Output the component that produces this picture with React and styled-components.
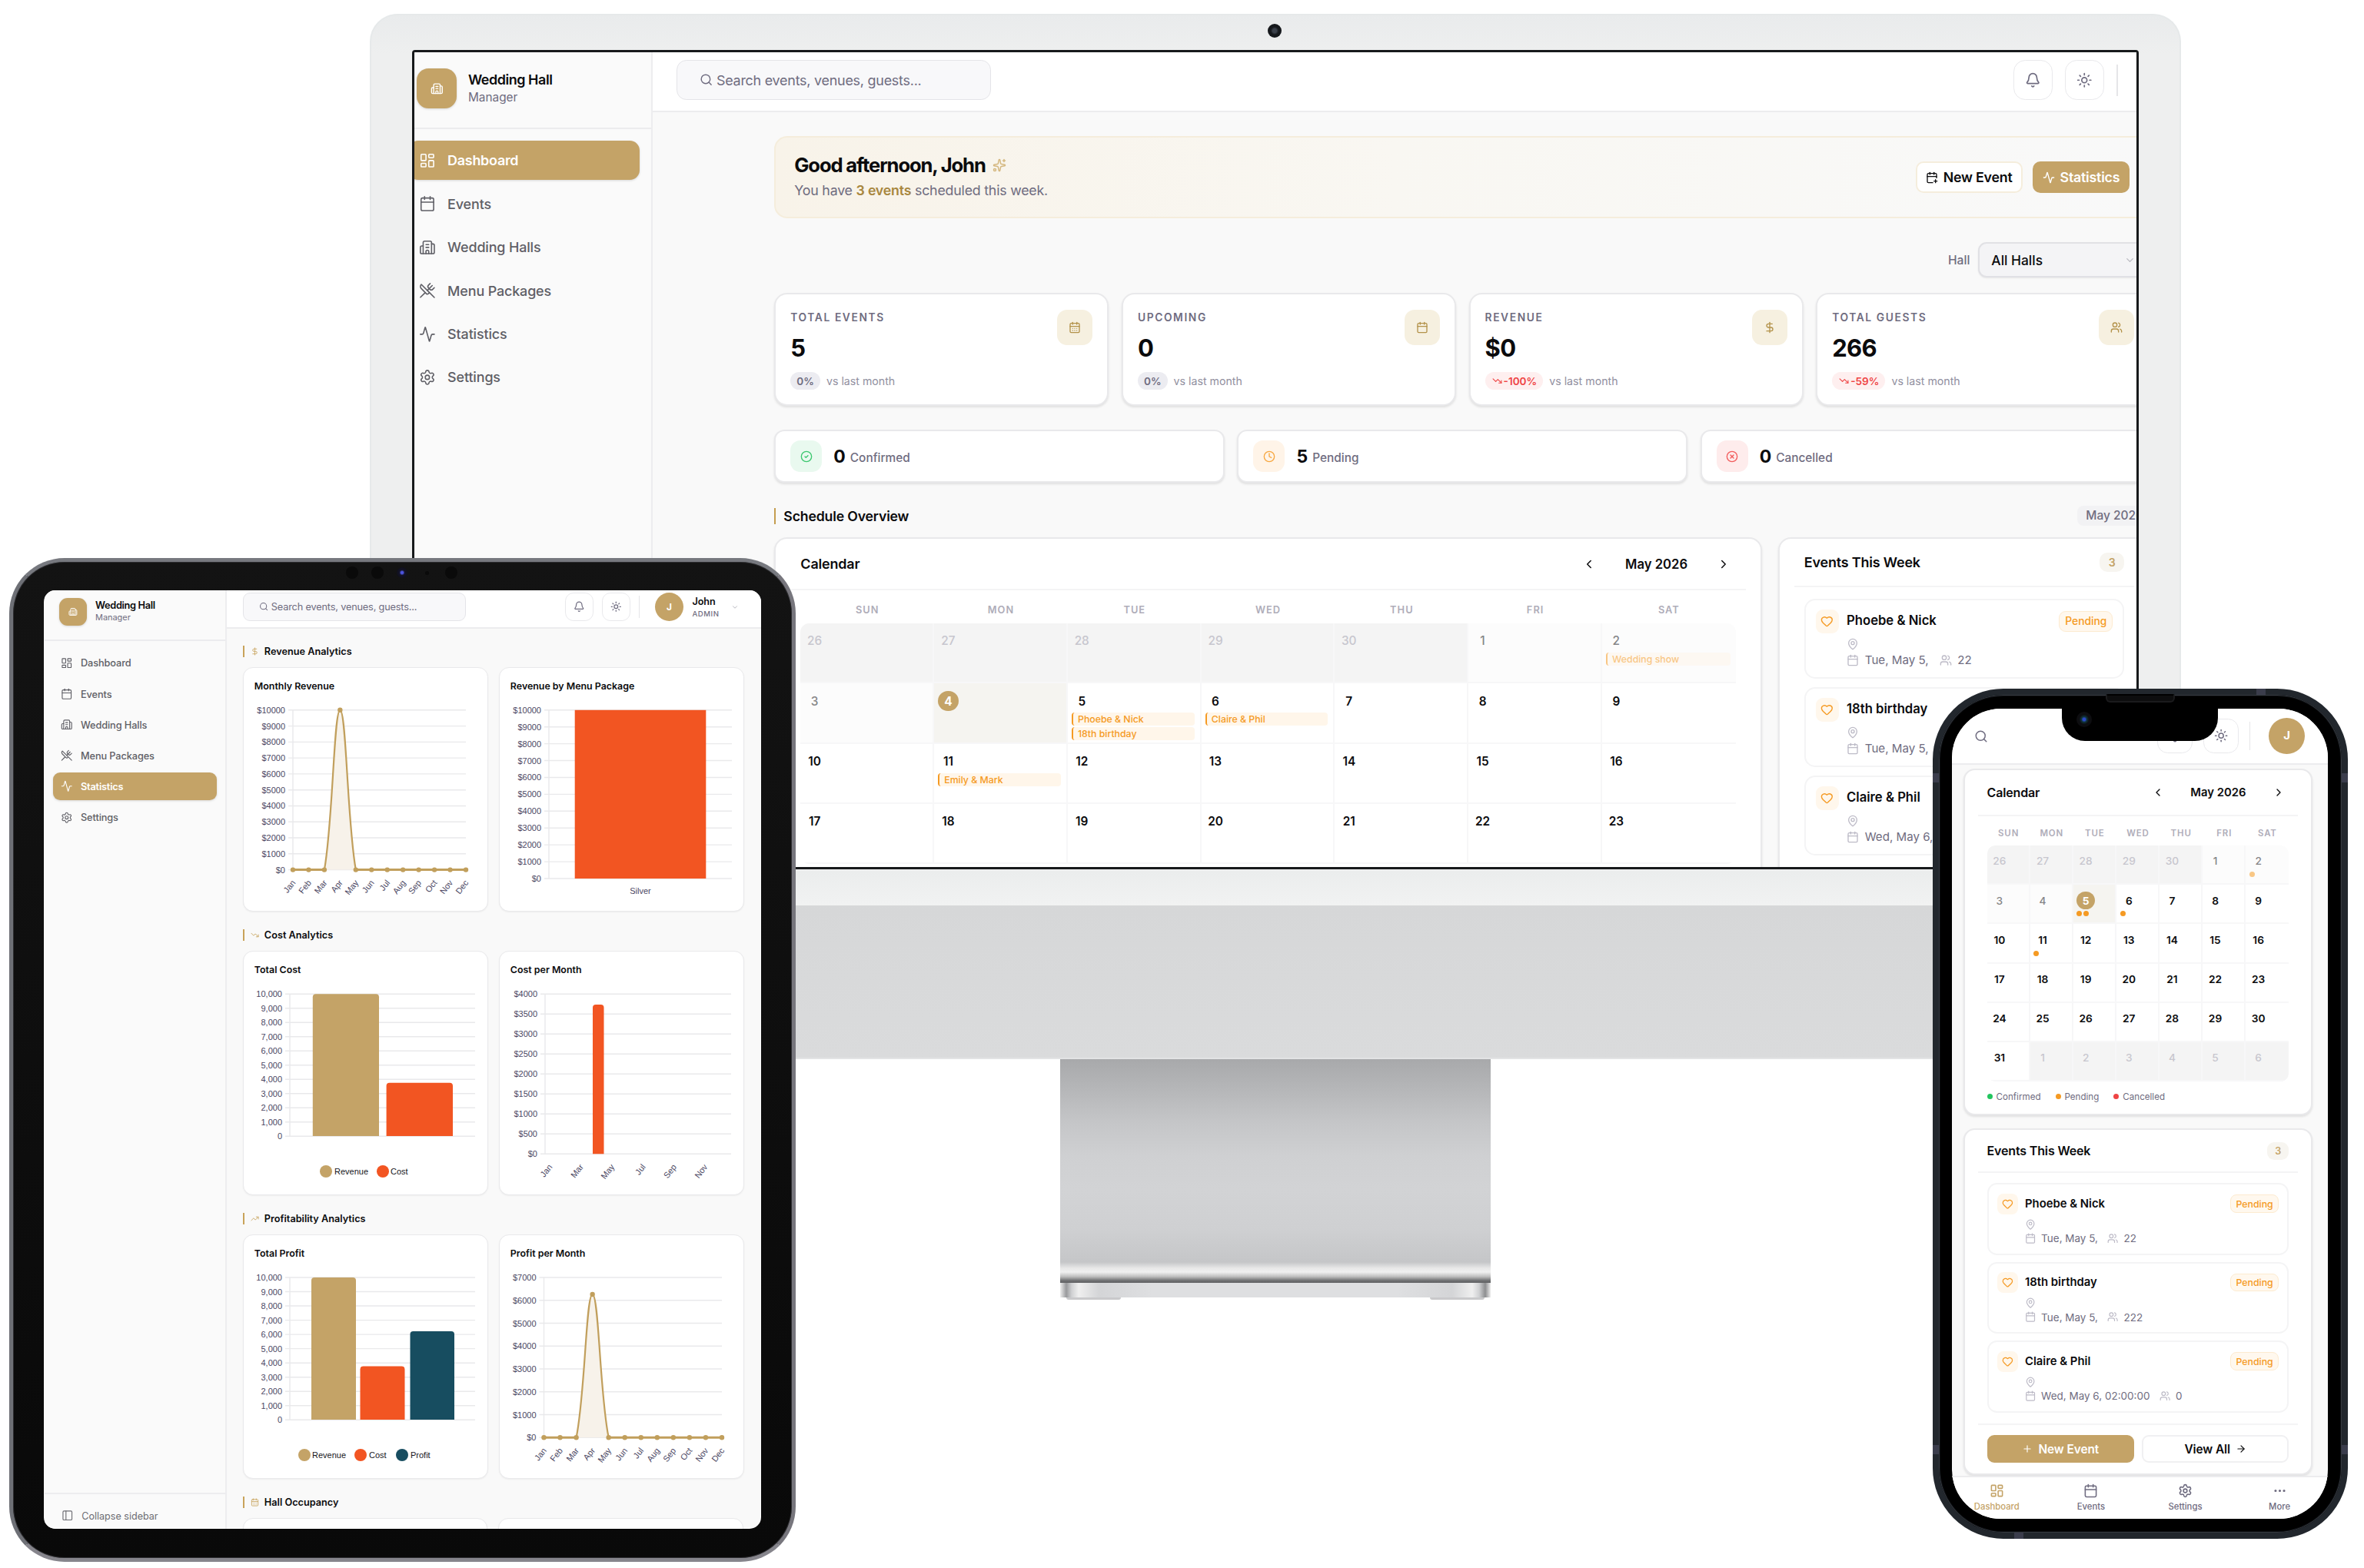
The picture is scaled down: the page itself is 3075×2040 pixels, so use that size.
import styled, { createGlobalStyle, css } from "styled-components";
import {
    Activity, ArrowRight, Bell, Building2, Calendar, CalendarDays, CalendarPlus, ChevronDown,
    ChevronLeft, ChevronRight, CircleCheck, CircleX, Clock, DollarSign, Ellipsis, Heart,
    LayoutDashboard, MapPin, PanelLeft, Plus, Search, Settings, Sparkles, Sun, TrendingDown,
    TrendingUp, Users, UtensilsCrossed,
} from "lucide-react";

// every screen sets --u, the size of one design pixel on that device
const u = (n) => `calc(var(--u) * ${n})`;

const GOLD = "#c4a367";
const ORANGE = "#f59a23";
const RED = "#f25522";
const TEAL = "#174d60";

const GlobalStyle = createGlobalStyle`
    *, *::before, *::after { box-sizing: border-box; }
    body {
        margin: 0;
        background: #fff;
        font-family: Inter, "Liberation Sans", sans-serif;
        color: #0b0b0d;
    }
    svg { display: block; flex-shrink: 0; }
`;

const Stage = styled.main`
    position: relative;
    width: 3075px;
    height: 2040px;
    overflow: hidden;
    background: #fff;
`;

/* ---------- devices ---------- */

const Monitor = styled.section`
    position: absolute;
    left: 481px;
    top: 18px;
    width: 2356px;
    display: flex;
    flex-direction: column;
    align-items: center;
`;

const Bezel = styled.div`
    width: 100%;
    height: 1160px;
    padding: 45px 55px 0;
    border: 2px solid #e6e9ea;
    border-bottom: 0;
    border-radius: 36px 36px 0 0;
    background: linear-gradient(#e9ebec 0, #eeefef 50px, #eeefef 1110px, #ebeded 1114px, #f1f2f2 1158px);
`;

const MonitorCam = styled.span`
    position: absolute;
    left: 1168px;
    top: 13px;
    width: 18px;
    height: 18px;
    border-radius: 50%;
    background: radial-gradient(circle, #3b414b 0 20%, #15181c 40%);
`;

const MonitorScreen = styled.div`
    --u: 1.282px;
    width: 2246px;
    height: 1066px;
    margin-left: -2px;
    border: 3px solid #17191b;
    border-radius: 4px;
    overflow: hidden;
    background: #f9f9f9;
`;

const Chin = styled.div`
    width: 100%;
    height: 200px;
    border-radius: 0 0 36px 36px;
    background: linear-gradient(#d6d7d8, #dadbdc);
    border-bottom: 2px solid #e2e3e4;
`;

const Neck = styled.div`
    width: 560px;
    height: 291px;
    background: linear-gradient(
        #a8a9ab 0, #b5b6b8 38px, #c4c5c7 80px, #cfd0d2 125px, #d2d3d5 170px, #cfd0d2 220px,
        #c5c6c8 264px, #e8e8e8 272px, #f0f0f0 277px, #bdbdbd 283px, #707173 288px, #606163 291px
    );
`;

const Foot = styled.div`
    width: 560px;
    height: 19px;
    padding: 0 2px;
    background: linear-gradient(90deg, #eee 0, #999a9c 8px, #d0d1d3 15px, #efefef 24px, #d4d5d7 50px, #dedfe1 120px, #dedfe1 440px, #d4d5d7 510px, #efefef 536px, #d0d1d3 545px, #8d8e90 553px, #eee 560px);
`;

const Pads = styled.div`
    width: 544px;
    display: flex;
    justify-content: space-between;
    span { width: 71px; height: 3px; background: #c9c9cb; border-radius: 0 0 4px 4px; }
`;

const Tablet = styled.section`
    position: absolute;
    left: 12px;
    top: 726px;
    width: 1023px;
    height: 1306px;
    padding: 37px 40px;
    border: 5px solid;
    border-color: #77797f #77767d #86858c #6e7076;
    border-radius: 72px;
    background: linear-gradient(#131313, #090909);
    box-shadow: inset 0 0 0 1px #2d2d30;
`;

const SideKey = styled.i`
    position: absolute;
    z-index: -1;
    left: ${(p) => p.$x}px;
    top: ${(p) => p.$y}px;
    width: ${(p) => p.$w}px;
    height: ${(p) => p.$h}px;
    background: ${(p) => p.$color || "#50525a"};
`;

const Lens = styled.i`
    position: absolute;
    left: ${(p) => p.$x}px;
    top: ${(p) => p.$y}px;
    width: ${(p) => p.$d}px;
    height: ${(p) => p.$d}px;
    border-radius: 50%;
    background: ${(p) => p.$fill || "#0a0a0a"};
`;

const TabletScreen = styled.div`
    --u: 0.911px;
    width: 933px;
    height: 1221px;
    border-radius: 15px;
    overflow: hidden;
    background: #f9f9f9;
`;

const Phone = styled.section`
    position: absolute;
    left: 2514px;
    top: 896px;
    width: 540px;
    height: 1106px;
    padding: 18px 17px;
    border: 8px solid #22272d;
    border-radius: 92px;
    background: #000;
    box-shadow: inset 0 0 0 1px #35393f, inset 0 0 0 2px #0b0d10;
`;

const Band = styled.i`
    position: absolute;
    left: ${(p) => p.$x}px;
    top: ${(p) => p.$y}px;
    width: ${(p) => (p.$flat ? 12 : 8)}px;
    height: ${(p) => (p.$flat ? 8 : 12)}px;
    background: #3b3d4c;
`;

const PhoneScreen = styled.div`
    --u: 1.143px;
    width: 489px;
    height: 1054px;
    border-radius: 64px;
    overflow: hidden;
    background: #f9f9f9;
    display: flex;
    flex-direction: column;
`;

const Notch = styled.div`
    position: absolute;
    left: 160px;
    top: 14px;
    width: 203px;
    height: 46px;
    border-radius: 0 0 30px 30px;
    background: #000;
`;

const Speaker = styled.i`
    position: absolute;
    left: 217px;
    top: -1px;
    width: 90px;
    height: 11px;
    border: 2px solid #1b1b1d;
    border-top-color: #000;
    border-radius: 3px 3px 6px 6px;
    background: #0d0d0e;
`;

/* ---------- app shell ---------- */

const Shell = styled.div`
    display: flex;
    height: calc(100% + ${(p) => p.$up}px);
    margin: -${(p) => p.$up}px 0 0 ${(p) => p.$left}px;
`;

const SidebarBox = styled.aside`
    width: ${u(260)};
    flex-shrink: 0;
    display: flex;
    flex-direction: column;
    background: #fafafa;
    border-right: 2px solid #ededef;
`;

const Brand = styled.div`
    height: ${u(81)};
    flex-shrink: 0;
    padding: 0 ${u(20.5)};
    display: flex;
    align-items: center;
    gap: ${u(12)};
    border-bottom: 2px solid #ececee;
`;

const Logo = styled.div`
    width: ${u(40)};
    height: ${u(40)};
    border-radius: ${u(12)};
    display: grid;
    place-items: center;
    background: ${GOLD};
    color: #fff;
    box-shadow: 0 1px 3px rgba(0, 0, 0, 0.15);
    svg { width: ${u(13)}; height: ${u(13)}; }
`;

const BrandText = styled.div`
    display: flex;
    flex-direction: column;
    strong { font-size: ${u(14)}; line-height: ${u(18)}; font-weight: 600; letter-spacing: -0.025em; }
    span { font-size: ${u(12)}; line-height: ${u(17)}; color: #6f6c80; }
`;

const Nav = styled.nav`
    flex: 1;
    padding: ${u(12)};
    display: flex;
    flex-direction: column;
    gap: ${u(4)};
`;

const NavItem = styled.a`
    height: ${u(40)};
    padding-left: ${u(10.6)};
    display: flex;
    align-items: center;
    gap: ${u(12)};
    border-radius: ${u(10)};
    font-size: ${u(14)};
    font-weight: 500;
    letter-spacing: -0.008em;
    color: #5f5f66;
    svg { width: ${u(17)}; height: ${u(17)}; stroke-width: 1.75; }
    ${(p) => p.$active && css`
        background: ${GOLD};
        color: #fff;
        font-weight: 600;
        letter-spacing: -0.015em;
        box-shadow: 0 1px 3px rgba(0, 0, 0, 0.15);
    `}
`;

const Collapse = styled.div`
    height: ${u(52)};
    flex-shrink: 0;
    padding: ${u(13)} ${u(24)} 0;
    display: flex;
    align-items: center;
    gap: ${u(12)};
    border-top: 2px solid #ededef;
    font-size: ${u(13.8)};
    color: #6c6c72;
    svg { width: ${u(17)}; height: ${u(17)}; stroke-width: 1.75; }
`;

const Main = styled.div`
    flex: 1;
    min-width: 0;
    display: flex;
    flex-direction: column;
`;

const TopBar = styled.header`
    height: ${u(64)};
    flex-shrink: 0;
    padding: ${(p) => p.$pad};
    display: flex;
    align-items: center;
    gap: ${u(12.5)};
    background: #fff;
    border-bottom: 2px solid #ececee;
`;

const SearchBox = styled.div`
    width: ${u(319)};
    height: ${u(40)};
    margin-right: auto;
    padding-left: ${u(22)};
    display: flex;
    align-items: center;
    gap: ${u(4)};
    border: ${u(1.5)} solid #e4e4e8;
    border-radius: ${u(10)};
    background: #f8f8fa;
    font-size: ${u(14)};
    letter-spacing: -0.014em;
    color: #6f6c80;
    svg { width: ${u(13.5)}; height: ${u(13.5)}; }
`;

const IconButton = styled.button`
    width: ${u(40)};
    height: ${u(40)};
    padding: 0;
    display: grid;
    place-items: center;
    border: ${u(1.5)} solid #e9e9ec;
    border-radius: ${u(12)};
    background: #fff;
    color: #6f6c80;
    svg { width: ${u(16)}; height: ${u(16)}; }
`;

const Divider = styled.i`
    width: ${u(1.4)};
    height: ${u(32)};
    background: #e5e5e8;
`;

const Avatar = styled.div`
    width: ${u(41)};
    height: ${u(41)};
    border-radius: 50%;
    display: grid;
    place-items: center;
    background: ${GOLD};
    color: #fff;
    font-size: ${u(13)};
    font-weight: 700;
`;

const UserName = styled.div`
    display: flex;
    flex-direction: column;
    margin-right: 4px;
    strong { font-size: 12.6px; line-height: 17px; font-weight: 600; }
    span { font-size: 9.6px; line-height: 15px; letter-spacing: 0.06em; font-weight: 500; color: #6f6c80; }
`;

const NAV = [
    ["Dashboard", LayoutDashboard],
    ["Events", Calendar],
    ["Wedding Halls", Building2],
    ["Menu Packages", UtensilsCrossed],
    ["Statistics", Activity],
    ["Settings", Settings],
];

const Sidebar = ({ active, children }) => (
    <SidebarBox>
        <Brand>
            <Logo><Building2 /></Logo>
            <BrandText>
                <strong>Wedding Hall</strong>
                <span>Manager</span>
            </BrandText>
        </Brand>
        <Nav>
            {NAV.map(([label, Icon]) => (
                <NavItem key={label} $active={label === active}>
                    <Icon />
                    {label}
                </NavItem>
            ))}
        </Nav>
        {children}
    </SidebarBox>
);

const HeaderSearch = () => (
    <SearchBox>
        <Search />
        Search events, venues, guests...
    </SearchBox>
);

/* ---------- cards shared by desktop and phone ---------- */

const Card = styled.div`
    border: 2px solid #e9e9eb;
    border-radius: ${u(13)};
    background: #fff;
    box-shadow: 0 2px 3px rgba(0, 0, 0, 0.1);
`;

const CalendarCard = styled(Card)`
    padding: 0 ${u(25)};
`;

const CardHead = styled.div`
    height: ${(p) => u(p.$h)};
    margin: 0 ${u(-10)};
    padding: 0 ${u(10)};
    display: flex;
    align-items: center;
    justify-content: space-between;
    border-bottom: 2px solid #f4f4f5;
    font-size: ${u(14)};
    font-weight: 600;
    letter-spacing: -0.01em;
`;

const MonthNav = styled.div`
    display: flex;
    align-items: center;
    gap: ${u(5)};
    padding-right: ${u(5)};
    font-size: ${u(13)};
    letter-spacing: 0;
    span { width: ${u(113)}; text-align: center; }
    svg { width: ${u(14)}; height: ${u(14)}; }
`;

const Week = styled.div`
    display: grid;
    grid-template-columns: repeat(7, 1fr);
    height: ${u(33.5)};
    align-items: center;
    padding-top: ${u(6)};
    text-align: center;
    font-size: ${u(10)};
    font-weight: 600;
    letter-spacing: 0.08em;
    color: #afadb9;
`;

const Days = styled.div`
    display: grid;
    grid-template-columns: repeat(7, 1fr);
    grid-auto-rows: ${(p) => p.$row}px;
    border-radius: ${u(9)};
    overflow: hidden;
`;

const Day = styled.div`
    min-width: 0;
    padding: ${u(7.6)} ${u(5.5)} 0 ${u(4)};
    border-right: 2px solid #f7f7f8;
    border-bottom: 2px solid #f7f7f8;
    display: flex;
    flex-direction: column;
    gap: 2px;
    &:nth-child(7n) { border-right: 0; }
    ${(p) => p.$kind === "out" && css`background: #f4f4f4; border-color: #f7f7f8; color: #c7c6ce;`}
    ${(p) => p.$kind === "past" && css`background: #fcfcfc; color: #858587;`}
    ${(p) => p.$kind === "today" && css`background: #f5f4f0;`}
    > * { opacity: ${(p) => (p.$kind === "past" ? 0.55 : 1)}; }
    > b { opacity: 1; }
`;

const DayNumber = styled.b`
    width: ${u(20.6)};
    height: ${u(20.6)};
    flex-shrink: 0;
    border-radius: 50%;
    display: grid;
    place-items: center;
    font-size: ${u(12)};
    font-weight: ${(p) => (p.$light ? 500 : 600)};
    ${(p) => p.$today && css`background: ${GOLD}; color: #fff; font-weight: 700;`}
`;

const Chip = styled.div`
    height: 17px;
    flex-shrink: 0;
    padding-left: 6px;
    display: flex;
    align-items: center;
    border-left: 2px solid ${ORANGE};
    border-radius: 4px;
    background: #fff6ea;
    color: ${ORANGE};
    font-size: 12.3px;
    font-weight: 500;
    white-space: nowrap;
`;

const Dots = styled.div`
    display: flex;
    gap: 2px;
`;

const Dot = styled.i`
    width: 7px;
    height: 7px;
    border-radius: 50%;
    background: ${(p) => p.$color || ORANGE};
`;

const Legend = styled.div`
    display: flex;
    align-items: center;
    gap: 19px;
    height: 42px;
    padding-bottom: 3px;
    font-size: 11.6px;
    color: #6f6c80;
    span { display: flex; align-items: center; gap: 5px; }
`;

const EventsCard = styled(Card)`
    padding: 0 ${u(25)};
`;

const Count = styled.span`
    min-width: ${u(25)};
    height: ${u(20)};
    display: grid;
    place-items: center;
    border-radius: ${u(8)};
    background: #f7f5f0;
    color: ${GOLD};
    font-size: ${u(11)};
    font-weight: 600;
`;

const EventList = styled.div`
    padding-top: ${u(11.5)};
    display: flex;
    flex-direction: column;
    gap: ${u(8.1)};
`;

const EventItem = styled.article`
    height: ${u(81.6)};
    padding: ${u(10)} ${u(10)};
    display: flex;
    align-items: flex-start;
    gap: ${u(8)};
    border: 2px solid #f4f4f5;
    border-radius: ${u(11)};
`;

const HeartBox = styled.div`
    width: ${u(23.5)};
    height: ${u(23.5)};
    display: grid;
    place-items: center;
    border-radius: ${u(7)};
    background: #fff7ec;
    color: ${ORANGE};
    svg { width: ${u(13)}; height: ${u(13)}; }
`;

const EventBody = styled.div`
    flex: 1;
    display: flex;
    flex-direction: column;
    strong { font-size: ${u(13)}; line-height: ${u(23)}; margin-bottom: ${u(4)}; font-weight: 600; }
`;

const Meta = styled.div`
    height: ${u(16)};
    display: flex;
    align-items: center;
    gap: ${u(6)};
    font-size: ${u(11.8)};
    color: #6f6c80;
    white-space: nowrap;
    svg { width: ${u(12.5)}; height: ${u(12.5)}; color: #bdbbc7; }
    svg + span + svg { margin-left: ${u(5)}; }
`;

const Pending = styled.span`
    height: ${u(20.5)};
    margin-top: ${u(1.5)};
    padding: 0 ${u(5.5)};
    display: flex;
    align-items: center;
    border: ${u(1.2)} solid #fdebd0;
    border-radius: ${u(7)};
    background: #fff8ee;
    color: ${ORANGE};
    font-size: ${u(10.8)};
    font-weight: 500;
`;

const CAL_EVENTS = {
    2: ["Wedding show"],
    5: ["Phoebe & Nick", "18th birthday"],
    6: ["Claire & Phil"],
    11: ["Emily & Mark"],
};

// May 2026 starts on a Friday
const buildDays = (rows, today) =>
    Array.from({ length: rows * 7 }, (_, i) => {
        const d = i - 4;
        if (d < 1) return { n: 30 + d, kind: "out" };
        if (d > 31) return { n: d - 31, kind: "out" };
        return { n: d, kind: d < today ? "past" : d === today ? "today" : "day", events: CAL_EVENTS[d] };
    });

const MonthCalendar = ({ rows, row, today, compact }) => (
    <CalendarCard>
        <CardHead $h={52.3}>
            Calendar
            <MonthNav>
                <ChevronLeft />
                <span>May 2026</span>
                <ChevronRight />
            </MonthNav>
        </CardHead>
        <Week>
            {["SUN", "MON", "TUE", "WED", "THU", "FRI", "SAT"].map((d) => <span key={d}>{d}</span>)}
        </Week>
        <Days $row={row}>
            {buildDays(rows, today).map((d, i) => (
                <Day key={i} $kind={d.kind}>
                    <DayNumber $today={d.kind === "today"} $light={d.kind === "out" || d.kind === "past"}>{d.n}</DayNumber>
                    {d.events && (compact
                        ? <Dots>{d.events.map((e) => <Dot key={e} />)}</Dots>
                        : d.events.map((e) => <Chip key={e}>{e}</Chip>))}
                </Day>
            ))}
        </Days>
        {compact && (
            <Legend>
                <span><Dot $color="#22c55e" />Confirmed</span>
                <span><Dot />Pending</span>
                <span><Dot $color="#ef4444" />Cancelled</span>
            </Legend>
        )}
    </CalendarCard>
);

const EVENTS = [
    { name: "Phoebe & Nick", date: "Tue, May 5,", guests: 22 },
    { name: "18th birthday", date: "Tue, May 5,", guests: 222 },
    { name: "Claire & Phil", date: "Wed, May 6, 02:00:00", guests: 0 },
];

const WeekEvents = ({ children }) => (
    <EventsCard>
        <CardHead $h={49}>
            Events This Week
            <Count>3</Count>
        </CardHead>
        <EventList>
            {EVENTS.map((e) => (
                <EventItem key={e.name}>
                    <HeartBox><Heart /></HeartBox>
                    <EventBody>
                        <strong>{e.name}</strong>
                        <Meta><MapPin /></Meta>
                        <Meta>
                            <Calendar />
                            <span>{e.date}</span>
                            <Users />
                            <span>{e.guests}</span>
                        </Meta>
                    </EventBody>
                    <Pending>Pending</Pending>
                </EventItem>
            ))}
        </EventList>
        {children}
    </EventsCard>
);

/* ---------- desktop dashboard ---------- */

const Dashboard = styled.div`
    width: 1790px;
    flex-shrink: 0;
    margin: 31px 0 0 158px;
    display: flex;
    flex-direction: column;
`;

const Banner = styled.div`
    height: 107px;
    padding: 0 25px 0 24px;
    display: flex;
    align-items: center;
    gap: 13px;
    border: 2px solid #f5eddc;
    border-radius: 17px;
    background: linear-gradient(90deg, #f8f3e9, #f9f7f2 45%, #f9f9f9);
`;

const Greeting = styled.div`
    flex: 1;
    h1 {
        margin: 0;
        display: flex;
        align-items: center;
        gap: 9px;
        font-size: 25.6px;
        line-height: 34px;
        font-weight: 700;
        letter-spacing: -0.045em;
    }
    h1 svg { width: 18px; height: 18px; color: #d5b880; }
    p { margin: 0; font-size: 17.8px; line-height: 32px; letter-spacing: -0.012em; color: #6f6c80; }
    b { font-weight: 600; color: #a8873f; }
`;

const Action = styled.button`
    height: 41px;
    padding: 0 11px;
    display: flex;
    align-items: center;
    gap: 7px;
    border: 2px solid ${(p) => (p.$gold ? GOLD : "#f5eddc")};
    border-radius: 10px;
    background: ${(p) => (p.$gold ? GOLD : "#fff")};
    color: ${(p) => (p.$gold ? "#fff" : "#0b0b0d")};
    font: 600 17.8px Inter, sans-serif;
    letter-spacing: -0.012em;
    svg { width: 16px; height: 16px; }
`;

const HallFilter = styled.div`
    height: 46px;
    margin: 31px 0 20px;
    display: flex;
    align-items: center;
    justify-content: flex-end;
    gap: 11px;
    font-size: 15.6px;
    font-weight: 500;
    color: #6f6c80;
`;

const Select = styled.div`
    width: 224px;
    height: 46px;
    padding: 0 17px 0 15px;
    display: flex;
    align-items: center;
    justify-content: space-between;
    border: 2px solid #e1e1e5;
    border-radius: 11px;
    background: #f4f4f6;
    font-size: 17.4px;
    color: #0b0b0d;
    box-shadow: 0 1px 2px rgba(0, 0, 0, 0.08);
    svg { width: 15px; height: 15px; color: #b9b9c0; }
`;

const Row = styled.div`
    display: grid;
    grid-template-columns: ${(p) => p.$cols};
    gap: ${(p) => p.$gap || 16.5}px;
    min-height: ${(p) => p.$min || 0}px;
`;

const StatusRow = styled(Row)`
    margin-top: 31px;
`;

const StatCard = styled(Card)`
    height: 147px;
    padding: 20px 19px 0;
    display: flex;
    justify-content: space-between;
`;

const StatBody = styled.div`
    h3 { margin: 0; font-size: 13.8px; line-height: 20px; font-weight: 600; letter-spacing: 0.115em; color: #6f6c80; }
    strong { display: block; margin-top: 12px; font-size: 31px; line-height: 36px; font-weight: 700; letter-spacing: -0.02em; }
    div { margin-top: 13px; display: flex; align-items: center; gap: 8px; font-size: 14.2px; color: #918fa0; }
`;

const Trend = styled.span`
    height: 23px;
    padding: 0 8px;
    display: flex;
    align-items: center;
    gap: 1px;
    border-radius: 12px;
    background: ${(p) => (p.$down ? "#feefef" : "#ececf1")};
    color: ${(p) => (p.$down ? "#ef4444" : "#6f6c80")};
    font-size: 13.6px;
    font-weight: 600;
    svg { width: 15px; height: 13px; }
`;

const IconTile = styled.div`
    width: ${(p) => p.$size}px;
    height: ${(p) => p.$size}px;
    display: grid;
    place-items: center;
    border-radius: 13px;
    background: ${(p) => p.$bg};
    color: ${(p) => p.$fg};
    svg { width: 16px; height: 16px; }
`;

const StatusCard = styled(Card)`
    height: 69px;
    padding: 0 19px;
    display: flex;
    align-items: center;
    border-radius: 13px;
    b { margin: 0 6px 0 15px; font-size: 23px; font-weight: 700; }
    span { padding-top: 3px; font-size: 15.4px; font-weight: 500; color: #6f6c80; }
`;

const SectionHead = styled.div`
    height: 26px;
    margin: 30px 0 15px;
    display: flex;
    align-items: center;
    justify-content: space-between;
    h2 { margin: 0; padding-left: 10px; border-left: 2px solid #c59e50; font-size: 17.7px; line-height: 21px; font-weight: 600; letter-spacing: -0.01em; }
    span { width: 95px; height: 26px; padding-left: 11px; border-radius: 8px; background: #f2f2f4; font-size: 15.5px; line-height: 26px; font-weight: 500; color: #6f6c80; }
`;

const STATS = [
    { title: "TOTAL EVENTS", value: "5", trend: "0%", Icon: CalendarDays },
    { title: "UPCOMING", value: "0", trend: "0%", Icon: Calendar },
    { title: "REVENUE", value: "$0", trend: "-100%", down: true, Icon: DollarSign },
    { title: "TOTAL GUESTS", value: "266", trend: "-59%", down: true, Icon: Users },
];

const STATUSES = [
    { label: "Confirmed", n: 0, bg: "#e9f9ef", fg: "#3cc76f", Icon: CircleCheck },
    { label: "Pending", n: 5, bg: "#fff4e8", fg: "#f7a842", Icon: Clock },
    { label: "Cancelled", n: 0, bg: "#feecec", fg: "#f25c5c", Icon: CircleX },
];

const DesktopApp = () => (
    <Shell $up={4} $left={-23}>
        <Sidebar active="Dashboard" />
        <Main>
            <TopBar $pad="0 24px 0 31px">
                <HeaderSearch />
                <IconButton><Bell /></IconButton>
                <IconButton><Sun /></IconButton>
                <Divider />
            </TopBar>
            <Dashboard>
                <Banner>
                    <Greeting>
                        <h1>Good afternoon, John <Sparkles /></h1>
                        <p>You have <b>3 events</b> scheduled this week.</p>
                    </Greeting>
                    <Action><CalendarPlus />New Event</Action>
                    <Action $gold><Activity />Statistics</Action>
                </Banner>
                <HallFilter>
                    Hall
                    <Select>All Halls <ChevronDown /></Select>
                </HallFilter>
                <Row $cols="repeat(4, 1fr)">
                    {STATS.map(({ title, value, trend, down, Icon }) => (
                        <StatCard key={title}>
                            <StatBody>
                                <h3>{title}</h3>
                                <strong>{value}</strong>
                                <div>
                                    <Trend $down={down}>{down && <TrendingDown />}{trend}</Trend>
                                    vs last month
                                </div>
                            </StatBody>
                            <IconTile $size={46} $bg="#f6f0e0" $fg="#b3924a"><Icon /></IconTile>
                        </StatCard>
                    ))}
                </Row>
                <StatusRow $cols="repeat(3, 1fr)">
                    {STATUSES.map(({ label, n, bg, fg, Icon }) => (
                        <StatusCard key={label}>
                            <IconTile $size={41} $bg={bg} $fg={fg}><Icon /></IconTile>
                            <b>{n}</b>
                            <span>{label}</span>
                        </StatusCard>
                    ))}
                </StatusRow>
                <SectionHead>
                    <h2>Schedule Overview</h2>
                    <span>May 2026</span>
                </SectionHead>
                <Row $cols="1284.5px 1fr" $gap={21} $min={470}>
                    <MonthCalendar rows={4} row={78.3} today={4} />
                    <WeekEvents />
                </Row>
            </Dashboard>
        </Main>
    </Shell>
);

/* ---------- tablet statistics ---------- */

const Sections = styled.div`
    width: 651px;
    margin: 19px 0 0 21px;
    display: flex;
    flex-direction: column;
`;

const Section = styled.section`
    height: 369px;
    flex-shrink: 0;
    h2 {
        margin: 0 0 11px;
        height: 20px;
        display: flex;
        align-items: center;
        gap: 6.5px;
        font-size: 12.7px;
        font-weight: 600;
    }
    h2::before { content: ""; width: 2px; height: 15px; margin-right: 2px; background: #c9a35a; }
    h2 svg { width: 11px; height: 11px; color: #cba866; }
`;

const Pair = styled.div`
    display: grid;
    grid-template-columns: 1fr 1fr;
    gap: 14px;
`;

const ChartCard = styled.div`
    height: 318px;
    border: 1.5px solid #e9e9eb;
    border-radius: 13px;
    background: #fff;
    box-shadow: 0 1px 2px rgba(0, 0, 0, 0.05);
    h3 { margin: 0; padding: 8px 0 0 14px; height: 35px; font-size: 12.4px; line-height: 32px; font-weight: 600; }
    svg { overflow: visible; }
    text { font-family: "Liberation Sans", Arial, sans-serif; font-size: 11px; fill: #4b4763; }
    .legend text { fill: #15151a; }
`;

const MONTHS = ["Jan", "Feb", "Mar", "Apr", "May", "Jun", "Jul", "Aug", "Sep", "Oct", "Nov", "Dec"];

const Axis = ({ labels, x, right, top, bottom }) => {
    const step = (bottom - top) / (labels.length - 1);
    return (
        <g>
            {labels.map((l, i) => (
                <g key={l}>
                    <line x1={x - 6} x2={right} y1={top + i * step} y2={top + i * step} stroke="#e9e9eb" strokeWidth="1.4" />
                    <text x={x - 10} y={top + i * step + 4} textAnchor="end">{l}</text>
                </g>
            ))}
            <line x1={x} x2={x} y1={top} y2={bottom} stroke="#e9e9eb" strokeWidth="1.4" />
        </g>
    );
};

const MonthLabels = ({ x, step, y, every = 1 }) =>
    MONTHS.map((m, i) => i % every === 0 && (
        <text key={m} textAnchor="end" transform={`translate(${x + i * step + 4} ${y + 17}) rotate(-52)`}>{m}</text>
    ));

const LineChart = ({ labels, x, right, top, bottom, peak }) => {
    const dx = (right - x) / 11;
    const h = bottom - peak;
    const mar = x + dx * 2;
    const apr = x + dx * 3;
    const may = x + dx * 4;
    const hump = `M${mar} ${bottom} C${mar + dx * 0.55} ${bottom - h * 0.3} ${apr - dx * 0.4} ${peak} ${apr} ${peak}
        C${apr + dx * 0.4} ${peak} ${may - dx * 0.55} ${bottom - h * 0.3} ${may} ${bottom}`;
    return (
        <>
            <Axis labels={labels} x={x} right={right} top={top} bottom={bottom} />
            <path d={hump} fill="#f7f2ea" />
            <path d={`M${x} ${bottom} H${mar} M${may} ${bottom} H${right}`} stroke="#c19f5c" strokeWidth="3" />
            <path d={hump} fill="none" stroke="#c19f5c" strokeWidth="2.2" />
            {MONTHS.map((m, i) => <circle key={m} cx={x + dx * i} cy={i === 3 ? peak : bottom} r="3.2" fill="#c19f5c" />)}
            <MonthLabels x={x} step={dx} y={bottom} />
        </>
    );
};

const Bar = ({ x1, x2, y, base, fill }) => (
    <path d={`M${x1} ${base} V${y + 4} q0 -4 4 -4 H${x2 - 4} q4 0 4 4 V${base} Z`} fill={fill} />
);

const Key = ({ x, tx, fill, children }) => (
    <g className="legend">
        <circle cx={x} cy="288" r="8" fill={fill} />
        <text x={tx} y="292">{children}</text>
    </g>
);

const Chart = ({ title, children }) => (
    <ChartCard>
        <h3>{title}</h3>
        <svg width="317" height="280" viewBox="0 37 317 280">{children}</svg>
    </ChartCard>
);

const ticks = (max, step, fmt) => {
    const out = [];
    for (let v = max; v >= 0; v -= step) out.push(fmt(v));
    return out;
};
const dollars = (v) => `$${v}`;
const plain = (v) => v.toLocaleString("en-US");

const TabletAvatar = styled(Avatar)`
    margin-left: 8px;
`;

const TabletApp = () => (
    <Shell $up={8} $left={1}>
        <Sidebar active="Statistics">
            <Collapse><PanelLeft />Collapse sidebar</Collapse>
        </Sidebar>
        <Main>
            <TopBar $pad="3px 29px 0 21px">
                <HeaderSearch />
                <IconButton><Bell /></IconButton>
                <IconButton><Sun /></IconButton>
                <Divider />
                <TabletAvatar>J</TabletAvatar>
                <UserName>
                    <strong>John</strong>
                    <span>ADMIN</span>
                </UserName>
                <ChevronDown size={10} color="#a9a9b2" />
            </TopBar>
            <Sections>
                <Section>
                    <h2><DollarSign />Revenue Analytics</h2>
                    <Pair>
                        <Chart title="Monthly Revenue">
                            <LineChart labels={ticks(10000, 1000, dollars)} x={64} right={289} top={56.8} bottom={264.6} peak={56.8} />
                        </Chart>
                        <Chart title="Revenue by Menu Package">
                            <Axis labels={ticks(10000, 1000, dollars)} x={64} right={302} top={56.8} bottom={276} />
                            <rect x="97.7" y="56.8" width="170.6" height="219.2" fill={RED} />
                            <text x="183" y="296" textAnchor="middle">Silver</text>
                        </Chart>
                    </Pair>
                </Section>
                <Section>
                    <h2><TrendingDown />Cost Analytics</h2>
                    <Pair>
                        <Chart title="Total Cost">
                            <Axis labels={ticks(10000, 1000, plain)} x={60} right={301} top={57.3} bottom={242.3} />
                            <Bar x1={89.8} x2={176} y={57.3} base={242} fill={GOLD} />
                            <Bar x1={185.6} x2={272} y={172.7} base={242} fill={RED} />
                            <Key x={107} tx={118} fill={GOLD}>Revenue</Key>
                            <Key x={181} tx={191} fill={RED}>Cost</Key>
                        </Chart>
                        <Chart title="Cost per Month">
                            <Axis labels={ticks(4000, 500, dollars)} x={59} right={301} top={57.3} bottom={265.3} />
                            <Bar x1={121} x2={135.5} y={71} base={265.3} fill={RED} />
                            <MonthLabels x={65} step={20.2} y={265.3} every={2} />
                        </Chart>
                    </Pair>
                </Section>
                <Section>
                    <h2><TrendingUp />Profitability Analytics</h2>
                    <Pair>
                        <Chart title="Total Profit">
                            <Axis labels={ticks(10000, 1000, plain)} x={60} right={301} top={57} bottom={242.3} />
                            <Bar x1={88} x2={146} y={57} base={242} fill={GOLD} />
                            <Bar x1={151.5} x2={209.5} y={172.6} base={242} fill={RED} />
                            <Bar x1={216.5} x2={274} y={127} base={242} fill={TEAL} />
                            <Key x={79} tx={89} fill={GOLD}>Revenue</Key>
                            <Key x={152} tx={163} fill={RED}>Cost</Key>
                            <Key x={206} tx={217} fill={TEAL}>Profit</Key>
                        </Chart>
                        <Chart title="Profit per Month">
                            <LineChart labels={ticks(7000, 1000, dollars)} x={57.5} right={289} top={57} bottom={265.3} peak={79} />
                        </Chart>
                    </Pair>
                </Section>
                <Section>
                    <h2><CalendarDays />Hall Occupancy</h2>
                    <Pair>
                        <ChartCard />
                        <ChartCard />
                    </Pair>
                </Section>
            </Sections>
        </Main>
    </Shell>
);

/* ---------- phone ---------- */

const PhoneBar = styled.header`
    height: 73px;
    flex-shrink: 0;
    padding: 0 30px 0 29px;
    display: flex;
    align-items: center;
    gap: 14px;
    background: #fff;
    border-bottom: 2px solid #ececee;
    color: #6f6c80;
    > svg { margin-right: auto; }
`;

const PhoneAvatar = styled(Avatar)`
    margin-left: 10px;
`;

const PhoneBody = styled.div`
    flex: 1;
    min-height: 0;
    width: 454px;
    margin-left: 15px;
    padding-top: 5px;
    display: flex;
    flex-direction: column;
    gap: 17px;
`;

const PhoneActions = styled.div`
    height: 65px;
    margin: 14px -12px 0;
    padding: 0 12px;
    display: grid;
    grid-template-columns: 1fr 1fr;
    gap: 10px;
    align-items: center;
    border-top: 2px solid #f4f4f5;
    button {
        height: 36px;
        padding: 0;
        display: flex;
        align-items: center;
        justify-content: center;
        gap: 7px;
        border: 2px solid #f0f0f2;
        border-radius: 9px;
        background: #fff;
        color: #0b0b0d;
        font: 600 15.4px Inter, sans-serif;
        letter-spacing: -0.005em;
    }
    button:first-child { background: ${GOLD}; border-color: ${GOLD}; color: #fff; }
`;

const Tabs = styled.nav`
    height: 56px;
    flex-shrink: 0;
    margin-left: -3px;
    display: grid;
    grid-template-columns: repeat(4, 122.6px);
    background: #fff;
    border-top: 2px solid #ececee;
    z-index: 1;
`;

const Tab = styled.a`
    padding-top: 8px;
    display: flex;
    flex-direction: column;
    align-items: center;
    gap: 3px;
    font-size: 11.3px;
    line-height: 17px;
    font-weight: 500;
    color: ${(p) => (p.$active ? GOLD : "#6f6c80")};
`;

const PhoneApp = () => (
    <>
        <PhoneBar>
            <Search size={18} />
            <IconButton><Bell /></IconButton>
            <IconButton><Sun /></IconButton>
            <Divider />
            <PhoneAvatar>J</PhoneAvatar>
        </PhoneBar>
        <PhoneBody>
            <MonthCalendar rows={6} row={51.2} today={5} compact />
            <WeekEvents>
                <PhoneActions>
                    <button><Plus size={14} />New Event</button>
                    <button>View All<ArrowRight size={14} /></button>
                </PhoneActions>
            </WeekEvents>
        </PhoneBody>
        <Tabs>
            <Tab $active><LayoutDashboard size={19} />Dashboard</Tab>
            <Tab><Calendar size={19} />Events</Tab>
            <Tab><Settings size={19} />Settings</Tab>
            <Tab><Ellipsis size={19} />More</Tab>
        </Tabs>
    </>
);

const App = () => (
    <>
        <GlobalStyle />
        <Stage>
            <Monitor>
                <Bezel>
                    <MonitorCam />
                    <MonitorScreen><DesktopApp /></MonitorScreen>
                </Bezel>
                <Chin />
                <Neck />
                <Foot />
                <Pads><span /><span /></Pads>
            </Monitor>

            <Tablet>
                <SideKey $x={900} $y={-7} $w={57} $h={3} $color="#85868c" />
                <SideKey $x={1018} $y={87} $w={2} $h={46} />
                <SideKey $x={1018} $y={142} $w={2} $h={46} />
                <Lens $x={433} $y={6} $d={16} />
                <Lens $x={466} $y={6} $d={16} />
                <Lens $x={499} $y={7} $d={14} $fill="radial-gradient(circle, #4d55e0 0 15%, #14142a 35%, #0c0c0f)" />
                <Lens $x={536} $y={12} $d={5} />
                <Lens $x={562} $y={6} $d={16} />
                <TabletScreen><TabletApp /></TabletScreen>
            </Tablet>

            <Phone>
                <SideKey $x={-12} $y={214} $w={4} $h={42} $color="#2a2e36" />
                <SideKey $x={-12} $y={294} $w={4} $h={83} $color="#2a2e36" />
                <SideKey $x={-12} $y={400} $w={4} $h={82} $color="#2a2e36" />
                <SideKey $x={532} $y={323} $w={4} $h={131} $color="#2a2e36" />
                <Band $x={-8} $y={102} />
                <Band $x={524} $y={102} />
                <Band $x={-8} $y={976} />
                <Band $x={524} $y={976} />
                <Band $x={413} $y={-8} $flat />
                <Band $x={98} $y={1090} $flat />
                <PhoneScreen><PhoneApp /></PhoneScreen>
                <Notch />
                <Speaker />
                <Lens $x={179} $y={22} $d={20} $fill="radial-gradient(circle, #2b49c9 0 12%, #10343a 25%, #0d0d10 45%)" />
            </Phone>
        </Stage>
    </>
);

export default App;
